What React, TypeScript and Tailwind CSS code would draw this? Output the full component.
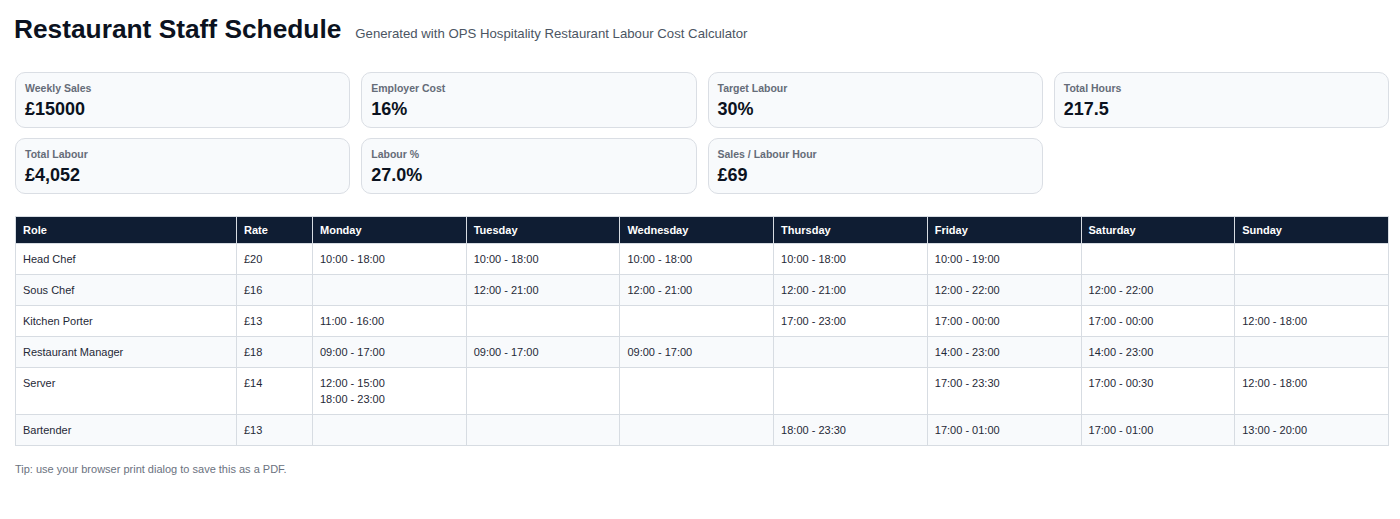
const stats = [
  { label: 'Weekly Sales', value: '£15000' },
  { label: 'Employer Cost', value: '16%' },
  { label: 'Target Labour', value: '30%' },
  { label: 'Total Hours', value: '217.5' },
  { label: 'Total Labour', value: '£4,052' },
  { label: 'Labour %', value: '27.0%' },
  { label: 'Sales / Labour Hour', value: '£69' },
];

const days = ['Monday', 'Tuesday', 'Wednesday', 'Thursday', 'Friday', 'Saturday', 'Sunday'];

type Row = { role: string; rate: string; shifts: string[][] };

const rows: Row[] = [
  {
    role: 'Head Chef',
    rate: '£20',
    shifts: [['10:00 - 18:00'], ['10:00 - 18:00'], ['10:00 - 18:00'], ['10:00 - 18:00'], ['10:00 - 19:00'], [], []],
  },
  {
    role: 'Sous Chef',
    rate: '£16',
    shifts: [[], ['12:00 - 21:00'], ['12:00 - 21:00'], ['12:00 - 21:00'], ['12:00 - 22:00'], ['12:00 - 22:00'], []],
  },
  {
    role: 'Kitchen Porter',
    rate: '£13',
    shifts: [['11:00 - 16:00'], [], [], ['17:00 - 23:00'], ['17:00 - 00:00'], ['17:00 - 00:00'], ['12:00 - 18:00']],
  },
  {
    role: 'Restaurant Manager',
    rate: '£18',
    shifts: [['09:00 - 17:00'], ['09:00 - 17:00'], ['09:00 - 17:00'], [], ['14:00 - 23:00'], ['14:00 - 23:00'], []],
  },
  {
    role: 'Server',
    rate: '£14',
    shifts: [['12:00 - 15:00', '18:00 - 23:00'], [], [], [], ['17:00 - 23:30'], ['17:00 - 00:30'], ['12:00 - 18:00']],
  },
  {
    role: 'Bartender',
    rate: '£13',
    shifts: [[], [], [], ['18:00 - 23:30'], ['17:00 - 01:00'], ['17:00 - 01:00'], ['13:00 - 20:00']],
  },
];

function StatCard({ label, value }: { label: string; value: string }) {
  return (
    <div className="h-[56px] rounded-[10px] border border-[#dadee4] bg-[#f8fafc] px-[9px] pt-[8px]">
      <div className="text-[10.5px] font-bold leading-[14px] text-[#656c78]">{label}</div>
      <div className="mt-[4px] text-[18px] font-bold leading-[20px] text-[#0b1220]">{value}</div>
    </div>
  );
}

export default function App() {
  return (
    <div className="min-h-[519px] bg-white pl-[15px] pr-[11px] pt-[14px] font-['Liberation_Sans',Arial,sans-serif]">
      <header className="flex items-baseline gap-[14px]">
        <h1 className="-ml-px text-[26.3px] font-bold leading-[31px] text-[#0b1220]">Restaurant Staff Schedule</h1>
        <span className="text-[13.2px] text-[#4b5563]">
          Generated with OPS Hospitality Restaurant Labour Cost Calculator
        </span>
      </header>

      <section className="mt-[27px] grid grid-cols-4 gap-x-[11px] gap-y-[10px]">
        {stats.map((s) => (
          <StatCard key={s.label} label={s.label} value={s.value} />
        ))}
      </section>

      <table className="mt-[22px] w-full table-fixed border-collapse text-[11px] leading-[16px] text-[#1f2937]">
        <colgroup>
          <col className="w-[221px]" />
          <col className="w-[76px]" />
          {days.map((d) => (
            <col key={d} />
          ))}
        </colgroup>
        <thead>
          <tr className="bg-[#0f1d33] text-left text-white">
            <th className="border border-[#d7dce2] px-[7px] py-[5px] font-bold">Role</th>
            <th className="border border-[#d7dce2] px-[7px] py-[5px] font-bold">Rate</th>
            {days.map((d) => (
              <th key={d} className="border border-[#d7dce2] px-[7px] py-[5px] font-bold">
                {d}
              </th>
            ))}
          </tr>
        </thead>
        <tbody>
          {rows.map((r, i) => (
            <tr key={r.role} className={i % 2 === 1 ? 'bg-[#f8fafc]' : 'bg-white'}>
              <td className="border border-[#d7dce2] px-[7px] py-[7px] align-top">{r.role}</td>
              <td className="border border-[#d7dce2] px-[7px] py-[7px] align-top">{r.rate}</td>
              {r.shifts.map((s, j) => (
                <td key={j} className="border border-[#d7dce2] px-[7px] py-[7px] align-top">
                  {s.map((t) => (
                    <div key={t}>{t}</div>
                  ))}
                </td>
              ))}
            </tr>
          ))}
        </tbody>
      </table>

      <p className="mt-[15px] text-[11px] text-[#6b7280]">Tip: use your browser print dialog to save this as a PDF.</p>
    </div>
  );
}
